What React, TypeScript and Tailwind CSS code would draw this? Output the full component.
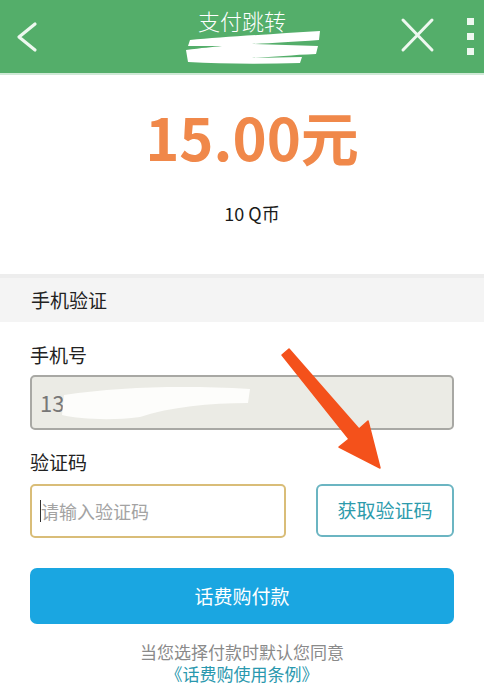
import React from "react";

export default function App() {
  return (
    <div
      className="relative w-[484px] h-[687px] overflow-hidden bg-white"
      style={{ fontFamily: '"Noto Sans CJK SC", "Noto Sans", sans-serif' }}
    >
      {/* header */}
      <div className="relative h-[75px] bg-[#54ae6a] border-b-2 border-[#cfe9d6]">
        <svg className="absolute left-[14px] top-[20px]" width="26" height="34" viewBox="0 0 26 34">
          <path d="M21 4 L5 17 L21 30" fill="none" stroke="#eef8f0" strokeWidth="3.2" strokeLinecap="round" strokeLinejoin="round" />
        </svg>
        <div className="absolute left-0 right-0 top-[5px] text-center text-[22px] leading-[30px] font-light text-white">
          支付跳转
        </div>
        {/* redaction scribble */}
        <svg className="absolute left-[182px] top-[28px]" width="142" height="38" viewBox="0 0 142 38">
          <path d="M8 12 C40 9 90 6 138 3 L137 12 C110 14 90 15 70 16 L136 18 L134 26 C110 27 90 29 70 30 L120 29 L118 35 C80 36 40 36 6 34 L4 22 C20 20 30 19 40 18 L6 18 Z" fill="#ffffff" />
        </svg>
        <svg className="absolute left-[399px] top-[17px]" width="38" height="36" viewBox="0 0 38 36">
          <path d="M4 3 L33 33 M33 3 L4 33" stroke="#eef8f0" strokeWidth="3" strokeLinecap="round" />
        </svg>
        <div className="absolute left-[467px] top-[18px] flex flex-col gap-[8px]">
          <div className="w-[7px] h-[7px] bg-[#eef8f0]" />
          <div className="w-[7px] h-[7px] bg-[#eef8f0]" />
          <div className="w-[7px] h-[7px] bg-[#eef8f0]" />
        </div>
      </div>

      {/* amount */}
      <div className="h-[199px] flex flex-col items-center pl-[20px]">
        <div className="mt-[25px] text-[58px] leading-[72px] font-bold text-[#f0884a]">
          15.00元
        </div>
        <div className="mt-[29px] text-[18px] leading-[24px] text-[#1a1a1a]">10 Q币</div>
      </div>

      {/* section title */}
      <div className="h-[48px] bg-[#f4f4f4] border-t-[4px] border-[#ededed] flex items-center px-[31px] text-[19px] text-[#222]">
        手机验证
      </div>

      {/* form */}
      <div className="px-[30px] pt-[19px]">
        <div className="text-[19px] leading-[28px] text-[#222]">手机号</div>
        <div className="relative mt-[6px] h-[55px] rounded-[5px] border-2 border-[#a8a8a4] bg-[#ebebe5] flex items-center px-[8px] text-[22px] text-[#777]">
          13
          <svg className="absolute left-[28px] top-[4px]" width="195" height="44" viewBox="0 0 195 44">
            <path d="M4 14 C60 6 120 4 190 8 L188 22 C150 22 110 26 80 36 C50 40 20 38 2 34 Z" fill="#fdfdfb" />
          </svg>
        </div>

        <div className="mt-[18px] text-[19px] leading-[28px] text-[#222]">验证码</div>
        <div className="mt-[8px] flex gap-[30px]">
          <div className="w-[256px] h-[54px] rounded-[5px] border-2 border-[#d9bd78] flex items-center px-[8px]">
            <div className="w-[1px] h-[22px] bg-[#333]" />
            <span className="text-[18px] text-[#a3a3a3]">请输入验证码</span>
          </div>
          <div className="flex-1 h-[53px] rounded-[6px] border-2 border-[#6bb5c2] flex items-center justify-center text-[19px] text-[#2d9bac]">
            获取验证码
          </div>
        </div>

        <div className="mt-[30px] h-[56px] rounded-[7px] bg-[#1aa6e1] flex items-center justify-center text-[19px] text-white">
          话费购付款
        </div>

        <div className="mt-[17px] text-center text-[17px] leading-[22px] text-[#8a8a8a]">
          当您选择付款时默认您同意
        </div>
        <div className="text-center text-[17px] leading-[22px] text-[#2a98ae]">《话费购使用条例》</div>
      </div>

      {/* annotation arrow */}
      <svg className="absolute left-0 top-0 pointer-events-none" width="484" height="687" viewBox="0 0 484 687">
        <polygon
          points="282,355 289,349 359,429 368,421 380,468 339,447 349,439"
          fill="#f4511b"
          strokeLinejoin="round"
          stroke="#f4511b"
          strokeWidth="1.5"
        />
      </svg>
    </div>
  );
}
